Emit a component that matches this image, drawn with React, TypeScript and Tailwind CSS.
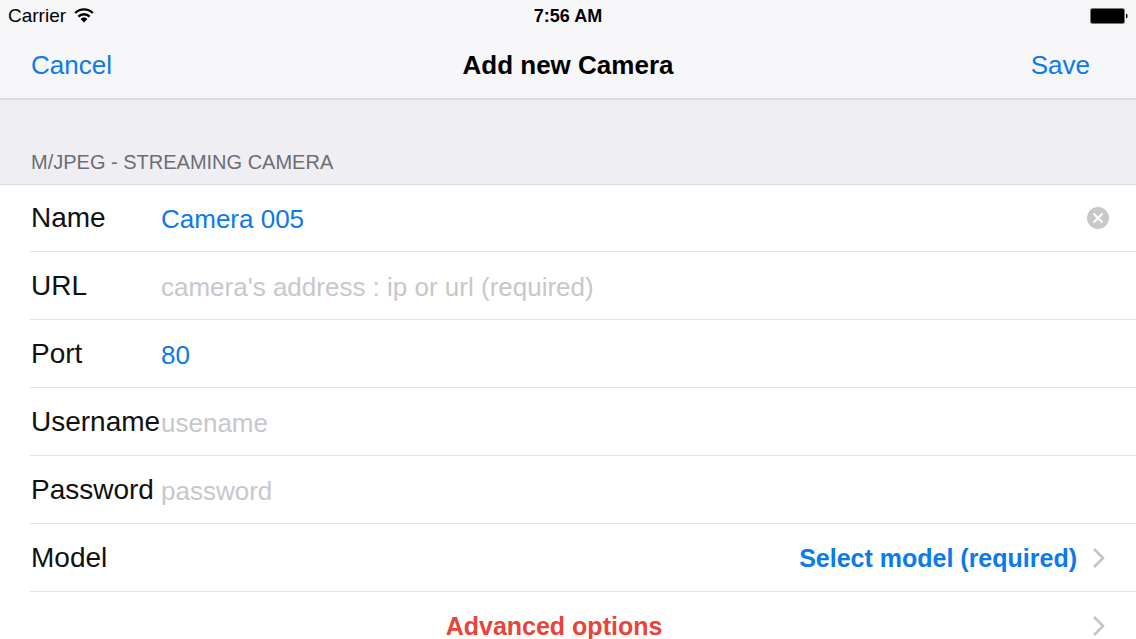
import { useState } from "react";
import type { ReactNode } from "react";

interface FieldProps {
    id: string;
    label: string;
    value: string;
    onChange: (value: string) => void;
    placeholder?: string;
    type?: string;
    clearable?: boolean;
}

function WifiIcon() {
    return (
        <svg className="w-5 h-4" viewBox="0 0 20 16" fill="none" aria-hidden="true">
            <path d="M1.2 5a12.6 12.6 0 0 1 17.6 0" stroke="#000" strokeWidth="2.4" />
            <path d="M4.4 8.6a8 8 0 0 1 11.2 0" stroke="#000" strokeWidth="2.4" />
            <path d="M10 14.4l-3.4-3.5a4.8 4.8 0 0 1 6.8 0z" fill="#000" />
        </svg>
    );
}

function BatteryIcon() {
    return (
        <svg className="w-[38px] h-4" viewBox="0 0 38 16" fill="none" aria-hidden="true">
            <rect x="0.5" y="0.5" width="34" height="15" rx="2" fill="#000" stroke="#777" />
            <path d="M36 5.5q1.6.3 1.6 2.5t-1.6 2.5z" fill="#000" />
        </svg>
    );
}

function Chevron() {
    return (
        <svg className="w-3 h-5 shrink-0" viewBox="0 0 12 20" fill="none" aria-hidden="true">
            <path d="M1 1l9 9-9 9" stroke="#c4c4c8" strokeWidth="2.6" />
        </svg>
    );
}

function Row({ children }: { children: ReactNode }) {
    return (
        <li className="ml-[30px] pl-px h-[68px] first:h-[67px] flex items-center border-b border-[#dfdfe1]">
            {children}
        </li>
    );
}

function Field({ id, label, value, onChange, placeholder, type = "text", clearable }: FieldProps) {
    return (
        <Row>
            <label htmlFor={id} className="w-[130px] shrink-0 text-[28px] leading-8 text-[#111]">
                {label}
            </label>
            <input
                id={id}
                type={type}
                value={value}
                placeholder={placeholder}
                onChange={(e) => onChange(e.target.value)}
                className="flex-1 min-w-0 h-10 pt-[3px] text-[26px] text-[#0a7aec] placeholder:text-[#c7c7cc] bg-transparent outline-none"
            />
            {clearable && value && (
                <button
                    type="button"
                    aria-label={`Clear ${label}`}
                    onClick={() => onChange("")}
                    className="mr-[27px]"
                >
                    <svg className="w-[22px] h-[22px]" viewBox="0 0 22 22" fill="none">
                        <circle cx="11" cy="11" r="11" fill="#c8c8c9" />
                        <path d="M6.5 6.5l9 9M15.5 6.5l-9 9" stroke="#fff" strokeWidth="2" />
                    </svg>
                </button>
            )}
        </Row>
    );
}

export default function App() {
    const [name, setName] = useState("Camera 005");
    const [url, setUrl] = useState("");
    const [port, setPort] = useState("80");
    const [username, setUsername] = useState("");
    const [password, setPassword] = useState("");

    return (
        <div className="h-screen overflow-hidden bg-white font-['Liberation_Sans',Arial,sans-serif] text-black">
            <header className="bg-[#f7f6f9] border-b-2 border-[#dad9dc]">
                {/* Status bar */}
                <div className="grid grid-cols-3 items-center h-8 px-2">
                    <div className="flex items-center gap-2 text-[19px]">
                        <span>Carrier</span>
                        <WifiIcon />
                    </div>
                    <span className="text-center text-[18px] font-bold">7:56 AM</span>
                    <div className="flex justify-end">
                        <BatteryIcon />
                    </div>
                </div>

                {/* Navigation */}
                <nav className="grid grid-cols-3 items-center h-[66px]">
                    <button type="button" className="justify-self-start ml-[31px] text-[26px] text-[#0a7aec]">
                        Cancel
                    </button>
                    <h1 className="text-center text-[26px] font-bold">Add new Camera</h1>
                    <button type="button" className="justify-self-end mr-[46px] text-[26px] text-[#0a7aec]">
                        Save
                    </button>
                </nav>
            </header>

            <main>
                <h2 className="h-[85px] flex items-end pl-[31px] pb-2 bg-[#efeef3] border-b border-[#dadadd] text-[20px] leading-7 text-[#6d6d72]">
                    M/JPEG - STREAMING CAMERA
                </h2>
                <ul>
                    <Field id="name" label="Name" value={name} onChange={setName} clearable />
                    <Field
                        id="url"
                        label="URL"
                        value={url}
                        onChange={setUrl}
                        placeholder="camera's address : ip or url (required)"
                    />
                    <Field id="port" label="Port" value={port} onChange={setPort} />
                    <Field
                        id="username"
                        label="Username"
                        value={username}
                        onChange={setUsername}
                        placeholder="usename"
                    />
                    <Field
                        id="password"
                        label="Password"
                        type="password"
                        value={password}
                        onChange={setPassword}
                        placeholder="password"
                    />
                    <Row>
                        <button type="button" className="flex-1 h-full flex items-center pr-[31px]">
                            <span className="text-[28px] leading-8 text-[#111]">Model</span>
                            <span className="flex-1 mr-4 pt-[3px] text-right text-[25px] font-bold text-[#0a7aec]">
                                Select model (required)
                            </span>
                            <Chevron />
                        </button>
                    </Row>
                    <Row>
                        <button type="button" className="flex-1 h-full flex items-center pr-[31px]">
                            <span className="flex-1 mr-4 pt-[3px] text-center text-[25px] font-bold text-[#e8443a]">
                                Advanced options
                            </span>
                            <Chevron />
                        </button>
                    </Row>
                </ul>
            </main>
        </div>
    );
}
